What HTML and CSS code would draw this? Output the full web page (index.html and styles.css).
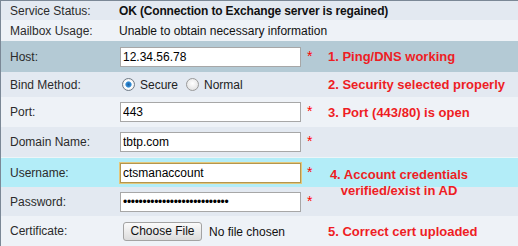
FILE: index.html
```html
<!DOCTYPE html>
<html lang="en">
<head>
    <meta charset="UTF-8">
    <title>Exchange Settings</title>
    <link rel="stylesheet" href="styles.css">
</head>
<body>
    <div class="panel">
        <div class="row dark first">
            <span class="label">Service Status:</span>
            <span class="value status">OK (Connection to Exchange server is regained)</span>
        </div>
        <div class="row light mailbox">
            <span class="label">Mailbox Usage:</span>
            <span class="value">Unable to obtain necessary information</span>
        </div>
        <div class="row host">
            <label class="label" for="host">Host:</label>
            <div class="field"><input type="text" id="host" value="12.34.56.78"></div>
            <span class="req">*</span>
            <span class="note">1. Ping/DNS working</span>
        </div>
        <div class="row dark bind">
            <span class="label">Bind Method:</span>
            <div class="field radios">
                <label class="radio"><input type="radio" name="bind" checked> Secure</label>
                <label class="radio"><input type="radio" name="bind"> Normal</label>
            </div>
            <span class="req"></span>
            <span class="note">2. Security selected properly</span>
        </div>
        <div class="row light">
            <label class="label" for="port">Port:</label>
            <div class="field"><input type="text" id="port" value="443"></div>
            <span class="req">*</span>
            <span class="note">3. Port (443/80) is open</span>
        </div>
        <div class="row dark">
            <label class="label" for="domain">Domain Name:</label>
            <div class="field"><input type="text" id="domain" value="tbtp.com"></div>
            <span class="req">*</span>
            <span class="note"></span>
        </div>
        <div class="row active">
            <label class="label" for="username">Username:</label>
            <div class="field"><input type="text" id="username" class="focused" value="ctsmanaccount"></div>
            <span class="req">*</span>
            <span class="note double">4. Account credentials<br>verified/exist in AD</span>
        </div>
        <div class="row dark password">
            <label class="label" for="password">Password:</label>
            <div class="field"><input type="password" id="password" value="abcdefghijklmnopqrstuvwxyza"></div>
            <span class="req">*</span>
            <span class="note"></span>
        </div>
        <div class="row light">
            <span class="label">Certificate:</span>
            <div class="field"><input type="file" id="cert"></div>
            <span class="req"></span>
            <span class="note">5. Correct cert uploaded</span>
        </div>
    </div>
</body>
</html>
```

FILE: styles.css
```css
body {
    margin: 0;
    font-family: "Liberation Sans", Arial, sans-serif;
    font-size: 12px;
    color: #222;
    background: #eef2f7;
}

.panel {
    border-left: 1px solid #7b8896;
    border-top: 1px solid #7b8896;
    width: 517px;
    height: 245px;
}

.row {
    display: grid;
    grid-template-columns: 118px 182px 26px 1fr;
    align-items: center;
    height: 30px;
}

.dark { background: #e3e9f1; }
.light { background: #eef2f7; }

.first { height: 19px; }
.mailbox { height: 21px; }
.host { height: 31px; background: #b4cad5; }
.bind { height: 25px; }
.password { height: 29px; }

.active {
    background: #b3edf8;
    border-top: 1px solid #edf5f8;
    height: 29px;
}

.label {
    padding-left: 9px;
    color: #2b2b2b;
}

.value {
    grid-column: 2 / -1;
    color: #111;
}

.status {
    font-weight: bold;
    letter-spacing: -0.15px;
}

.field input[type="text"],
.field input[type="password"] {
    box-sizing: border-box;
    width: 181px;
    height: 20px;
    margin: 0 0 0 1px;
    padding: 0 2px;
    border: 1px solid #a7a7a7;
    background: white;
    font-family: "Liberation Sans", Arial, sans-serif;
    font-size: 12px;
    color: #000;
    outline: none;
}

.field input.focused {
    border: 1px solid #b4964e;
    box-shadow: 0 0 0 1px #e3c77c;
}

.field input[type="password"] {
    letter-spacing: -0.3px;
}

.radios {
    display: flex;
    gap: 8px;
    padding-left: 3px;
}

.radio {
    display: flex;
    align-items: center;
    gap: 5px;
    font-size: 12px;
    color: #222;
}

.radio input {
    appearance: none;
    width: 13px;
    height: 13px;
    margin: 0;
    border: 1px solid #9a9a9a;
    border-radius: 50%;
    background: radial-gradient(circle at 50% 40%, #ffffff 0%, #e6e6e6 70%, #d0d0d0 100%);
    box-sizing: border-box;
}

.radio input:checked {
    background: radial-gradient(circle at 50% 50%, #1d5e9c 0%, #2f86cf 28%, #5aa6e2 36%, #ffffff 46%, #dedede 100%);
    border-color: #6f7a86;
}

.field input[type="file"] {
    margin: 0 0 0 4px;
    font-family: "Liberation Sans", Arial, sans-serif;
    font-size: 12px;
    color: #111;
}

.field input[type="file"]::file-selector-button {
    height: 19px;
    width: 79px;
    margin-right: 7px;
    padding: 0;
    border: 1px solid #a3a3a3;
    border-radius: 3px;
    background: linear-gradient(#fbfbfb, #dcdcdc);
    font-family: "Liberation Sans", Arial, sans-serif;
    font-size: 12px;
    color: #111;
}

.req {
    padding-left: 6px;
    color: #f00;
    font-size: 14px;
    align-self: center;
    margin-top: -2px;
}

.note {
    padding-left: 1px;
    color: #ee1d24;
    font-weight: bold;
    font-size: 13px;
    white-space: nowrap;
}

.note.double {
    align-self: start;
    margin-top: 9px;
    height: 0;
    line-height: 16px;
    width: 142px;
    text-align: center;
}
```
